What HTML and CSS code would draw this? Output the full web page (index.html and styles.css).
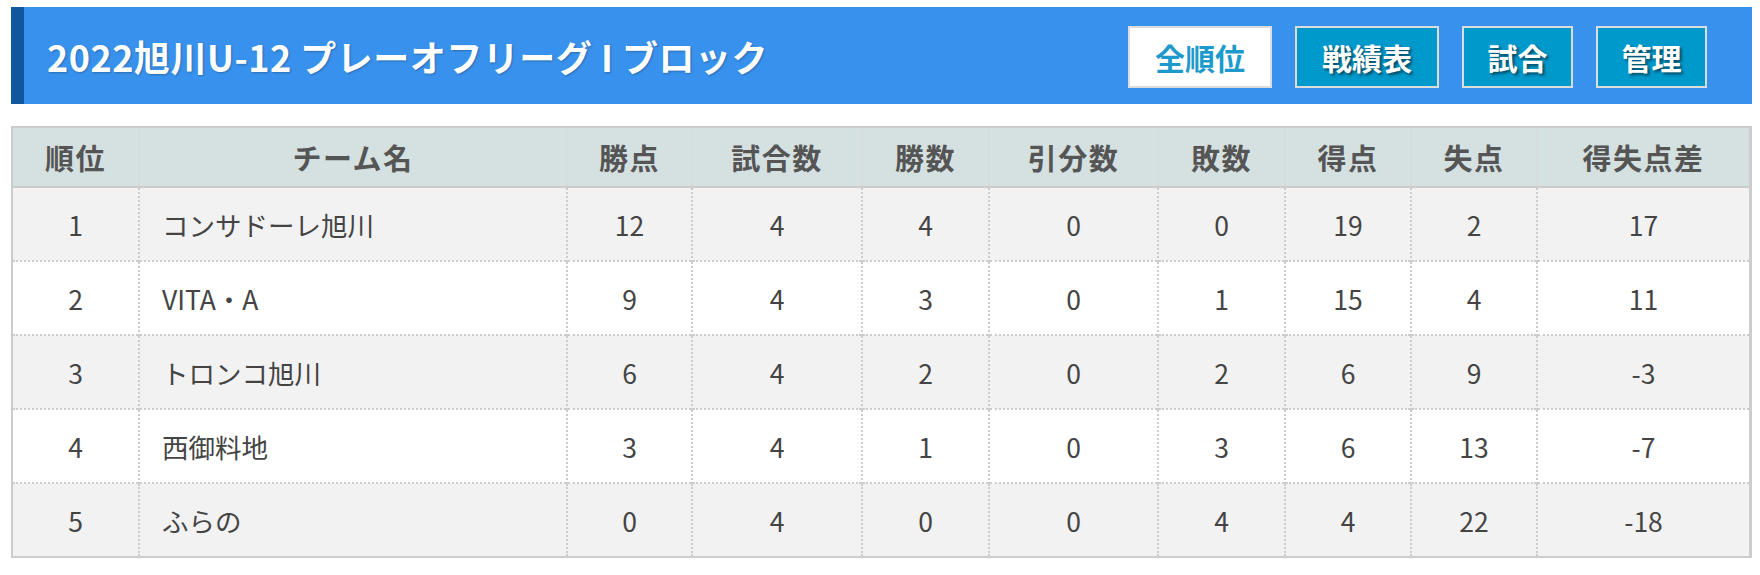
FILE: index.html
```html
<!DOCTYPE html>
<html lang="ja">
<head>
<meta charset="utf-8">
<title>2022旭川U-12 プレーオフリーグ I ブロック</title>
<link rel="stylesheet" href="styles.css">
</head>
<body>
<div class="wrap">
  <div class="head">
    <h1 class="title">2022旭川U-12 プレーオフリーグ I ブロック</h1>
    <nav class="btns">
      <a class="btn btn-active btn-w3">全順位</a>
      <a class="btn btn-w3">戦績表</a>
      <a class="btn btn-w2">試合</a>
      <a class="btn btn-w2">管理</a>
    </nav>
  </div>
  <table class="standings">
    <colgroup>
      <col class="c-rank"><col class="c-team"><col class="c-pts"><col class="c-gp"><col class="c-w"><col class="c-d"><col class="c-l"><col class="c-gf"><col class="c-ga"><col class="c-gd">
    </colgroup>
    <thead>
      <tr><th>順位</th><th>チーム名</th><th>勝点</th><th>試合数</th><th>勝数</th><th>引分数</th><th>敗数</th><th>得点</th><th>失点</th><th>得失点差</th></tr>
    </thead>
    <tbody>
      <tr><td>1</td><td class="team">コンサドーレ旭川</td><td>12</td><td>4</td><td>4</td><td>0</td><td>0</td><td>19</td><td>2</td><td>17</td></tr>
      <tr><td>2</td><td class="team">VITA・A</td><td>9</td><td>4</td><td>3</td><td>0</td><td>1</td><td>15</td><td>4</td><td>11</td></tr>
      <tr><td>3</td><td class="team">トロンコ旭川</td><td>6</td><td>4</td><td>2</td><td>0</td><td>2</td><td>6</td><td>9</td><td>-3</td></tr>
      <tr><td>4</td><td class="team">西御料地</td><td>3</td><td>4</td><td>1</td><td>0</td><td>3</td><td>6</td><td>13</td><td>-7</td></tr>
      <tr><td>5</td><td class="team">ふらの</td><td>0</td><td>4</td><td>0</td><td>0</td><td>4</td><td>4</td><td>22</td><td>-18</td></tr>
    </tbody>
  </table>
</div>
</body>
</html>
```

FILE: styles.css
```css
html, body {
  margin: 0;
  padding: 0;
  background: #ffffff;
}
body {
  font-family: "Noto Sans CJK JP", "Noto Sans", sans-serif;
  color: #444;
}
.wrap {
  margin: 7px 8px 0 11px;
}
.head {
  display: flex;
  align-items: center;
  justify-content: space-between;
  height: 97px;
  box-sizing: border-box;
  background: #3891ec;
  border-left: 13px solid #10579e;
  padding: 0 45px 0 23px;
}
.title {
  margin: 0;
  font-size: 36px;
  font-weight: 700;
  color: #fff;
  letter-spacing: 0.5px;
  text-shadow: 1px 1px 2px rgba(0,0,0,0.25);
  white-space: nowrap;
}
.btns {
  display: flex;
  gap: 23px;
  padding-top: 2px;
}
.btn {
  display: flex;
  align-items: center;
  justify-content: center;
  height: 62px;
  box-sizing: border-box;
  background: #0099cc;
  border: 2px solid #dcdcdc;
  color: #fff;
  font-size: 30px;
  font-weight: 700;
  text-shadow: 2px 2px 3px rgba(0,0,0,0.55);
  text-decoration: none;
}
.btn-w3 { width: 144px; }
.btn-w2 { width: 111px; }
.btn-active {
  background: #fff;
  color: #1d9acb;
  text-shadow: none;
}
.standings {
  margin-top: 22px;
  width: 100%;
  border-collapse: collapse;
  table-layout: fixed;
  border: 2px solid #cccccc;
  border-right-width: 3px;
  font-size: 26.5px;
}
.c-rank { width: 127px; }
.c-team { width: 428px; }
.c-pts { width: 125px; }
.c-gp { width: 170px; }
.c-w { width: 127px; }
.c-d { width: 169px; }
.c-l { width: 127px; }
.c-gf { width: 126px; }
.c-ga { width: 126px; }
.c-gd { width: auto; }
.standings th {
  height: 58px;
  background: #d5e0e0;
  color: #555;
  font-weight: 700;
  font-size: 29px;
  letter-spacing: 1.5px;
  border-bottom: 2px solid #cccccc;
  border-left: 2px dotted #d9d9d9;
  padding: 0;
}
.standings td {
  height: 72px;
  text-align: center;
  color: #444;
  border-top: 2px dotted #cccccc;
  border-left: 2px dotted #cccccc;
  padding: 0;
}
.standings th:first-child,
.standings td:first-child { border-left: none; }
.standings tbody tr:nth-child(odd) { background: #f2f2f2; }
.standings tbody tr:nth-child(even) { background: #ffffff; }
.standings tbody tr:first-child td { border-top: none; }
.standings td.team {
  text-align: left;
  padding-left: 22px;
}
```
